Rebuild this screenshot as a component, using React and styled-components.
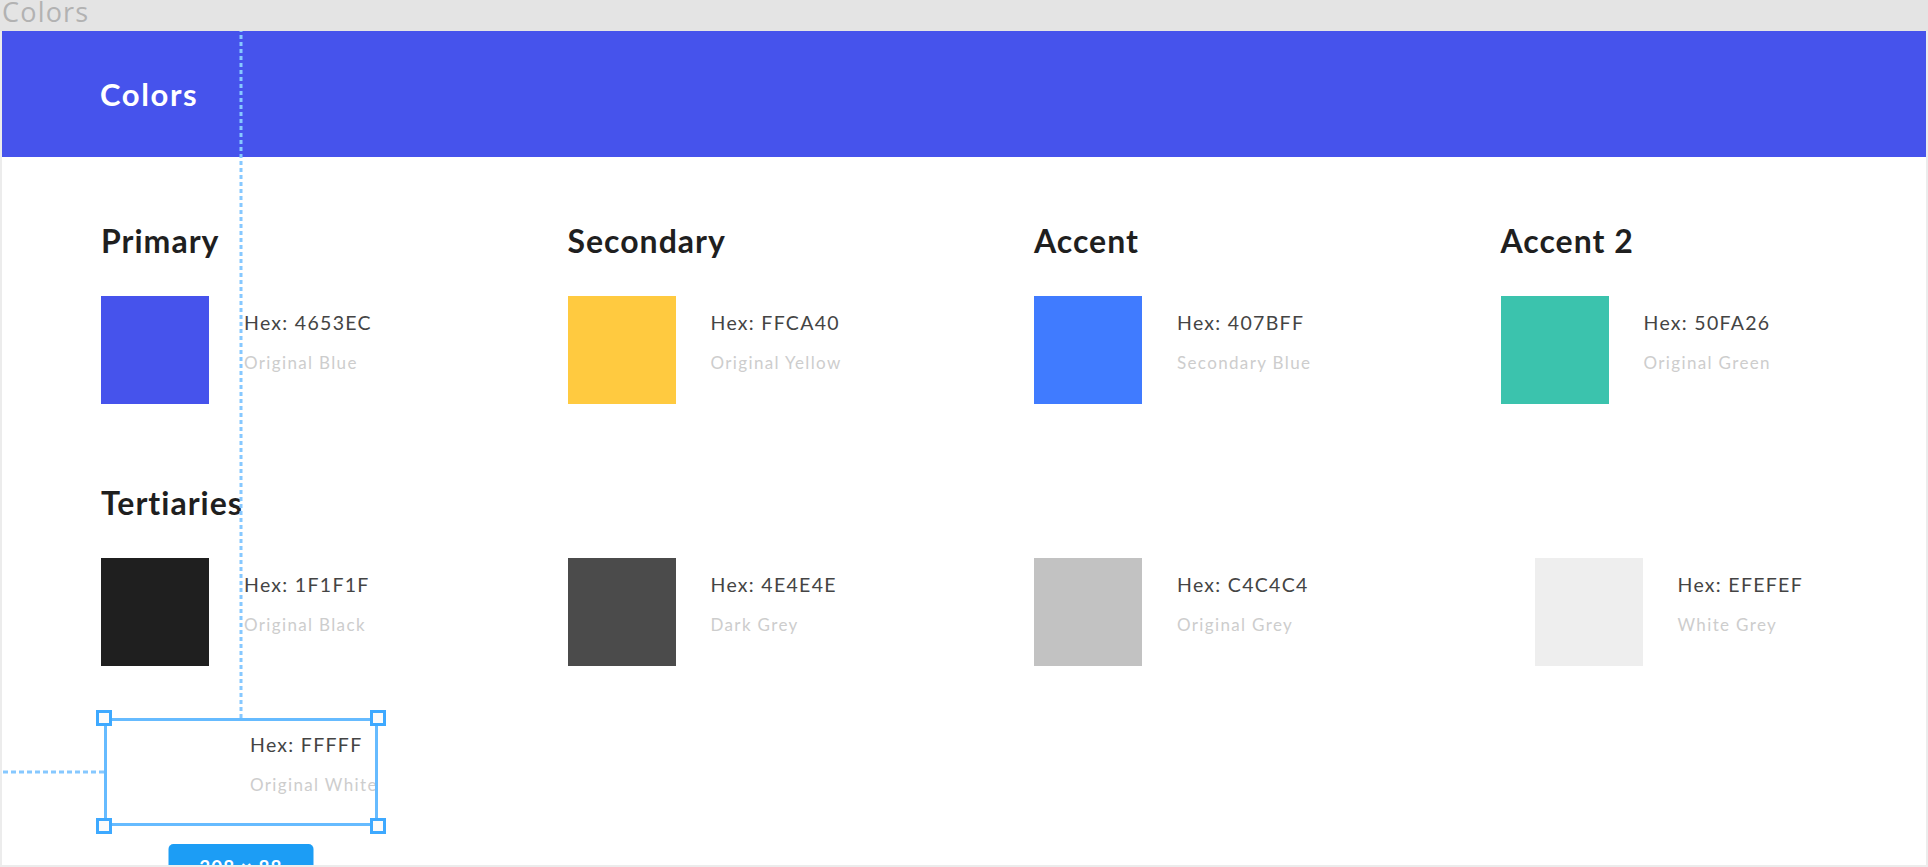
import React from "react";
import styled, { createGlobalStyle } from "styled-components";

const GlobalStyle = createGlobalStyle`
  html, body {
    margin: 0;
    padding: 0;
    background: #ffffff;
    overflow: hidden;
  }
  body {
    font-family: Lato, "Liberation Sans", sans-serif;
  }
  * { box-sizing: border-box; }
`;

const Page = styled.div`
  width: 1928px;
  height: 867px;
  display: flex;
  flex-direction: column;
  overflow: hidden;
`;

const TopBar = styled.div`
  flex: none;
  height: 31px;
  background: #e4e4e4;
  padding-left: 2px;
  display: flex;
  align-items: flex-start;
`;

const TopLabel = styled.span`
  font-family: "Open Sans", "Liberation Sans", sans-serif;
  font-size: 27px;
  line-height: 23px;
  color: #b2b2b2;
  letter-spacing: 1.2px;
`;

const Frame = styled.div`
  position: relative;
  flex: 1;
  display: flex;
  flex-direction: column;
  border: 2px solid #ececec;
  border-top: none;
  overflow: hidden;
`;

const Banner = styled.header`
  flex: none;
  height: 126px;
  background: #4653ec;
  display: flex;
  align-items: center;
  padding-left: 98px;
`;

const BannerTitle = styled.h1`
  margin: 0;
  font-family: Lato, "Liberation Sans", sans-serif;
  font-weight: 700;
  font-size: 31px;
  line-height: 31px;
  letter-spacing: 1.6px;
  color: #ffffff;
`;

const Content = styled.main`
  display: flex;
  flex-direction: column;
  align-items: flex-start;
  padding: 68px 0 0 99px;
`;

const PaletteGrid = styled.div`
  display: grid;
  grid-template-columns: repeat(4, 466.5px);
`;

const Group = styled.section`
  display: flex;
  flex-direction: column;
`;

const GroupTitle = styled.h2`
  margin: 0 0 ${(p) => p.$gap || 40}px;
  font-family: Lato, "Liberation Sans", sans-serif;
  font-weight: 700;
  font-size: 32px;
  line-height: 31px;
  letter-spacing: 1px;
  color: #1f1f1f;
`;

const SectionTitle = styled(GroupTitle)`
  margin-top: 83px;
`;

const SwatchRow = styled.div`
  display: flex;
  gap: ${(p) => p.$gap || 35}px;
  margin-left: ${(p) => p.$offset || 0}px;
`;

const Swatch = styled.div`
  flex: none;
  width: 108px;
  height: 108px;
  background: ${(p) => p.$color};
`;

const Info = styled.div`
  display: flex;
  flex-direction: column;
  gap: 22px;
  padding-top: 17px;
  white-space: nowrap;
`;

const Hex = styled.span`
  font-size: 19.5px;
  line-height: 19px;
  letter-spacing: 1.3px;
  color: #444444;
`;

const Name = styled.span`
  font-size: 17px;
  line-height: 17px;
  letter-spacing: 1.35px;
  color: #cdcdcd;
`;

const SelectedItem = styled.div`
  position: relative;
  margin-top: 52px;
  margin-left: 3px;
`;

const SelectionOutline = styled.div`
  position: absolute;
  inset: 0;
  border: 3px solid #66bbff;
  pointer-events: none;
`;

const Handle = styled.span`
  position: absolute;
  width: 16px;
  height: 16px;
  background: #fbfbfb;
  border: 3px solid #3ea9ff;
  ${(p) => (p.$v === "top" ? "top: -8px;" : "bottom: -8px;")}
  ${(p) => (p.$h === "left" ? "left: -8px;" : "right: -8px;")}
`;

const GuideV = styled.div`
  position: absolute;
  left: 50%;
  bottom: 100%;
  width: 3px;
  height: 800px;
  transform: translateX(-50%);
  background: repeating-linear-gradient(
    to top,
    #86c8ff 0 4px,
    transparent 4px 7px
  );
`;

const GuideH = styled.div`
  position: absolute;
  right: 100%;
  top: 50%;
  height: 3px;
  width: 200px;
  transform: translateY(-50%);
  background: repeating-linear-gradient(
    to left,
    #86c8ff 0 5px,
    transparent 5px 8px
  );
`;

const SizeBadge = styled.div`
  position: absolute;
  left: 50%;
  top: calc(100% + 18px);
  transform: translateX(-50%);
  width: 145px;
  height: 44px;
  border-radius: 5px;
  background: #1c9df5;
  color: #ffffff;
  font-size: 19px;
  font-weight: 700;
  line-height: 46px;
  text-align: center;
  letter-spacing: 1px;
`;

const primaries = [
  { title: "Primary", color: "#4653EC", hex: "4653EC", name: "Original Blue" },
  { title: "Secondary", color: "#FFCA40", hex: "FFCA40", name: "Original Yellow" },
  { title: "Accent", color: "#407BFF", hex: "407BFF", name: "Secondary Blue" },
  { title: "Accent 2", color: "#3BC3AD", hex: "50FA26", name: "Original Green" },
];

const tertiaries = [
  { color: "#1F1F1F", hex: "1F1F1F", name: "Original Black", offset: 0 },
  { color: "#4B4B4B", hex: "4E4E4E", name: "Dark Grey", offset: 0 },
  { color: "#C2C2C2", hex: "C4C4C4", name: "Original Grey", offset: 0 },
  { color: "#EEEEEE", hex: "EFEFEF", name: "White Grey", offset: 34 },
];

function ColorItem({ color, hex, name, offset, gap }) {
  return (
    <SwatchRow $offset={offset} $gap={gap}>
      <Swatch $color={color} />
      <Info>
        <Hex>Hex: {hex}</Hex>
        <Name>{name}</Name>
      </Info>
    </SwatchRow>
  );
}

export default function App() {
  return (
    <Page>
      <GlobalStyle />
      <TopBar>
        <TopLabel>Colors</TopLabel>
      </TopBar>
      <Frame>
        <Banner>
          <BannerTitle>Colors</BannerTitle>
        </Banner>
        <Content>
          <PaletteGrid>
            {primaries.map((c) => (
              <Group key={c.title}>
                <GroupTitle>{c.title}</GroupTitle>
                <ColorItem color={c.color} hex={c.hex} name={c.name} />
              </Group>
            ))}
          </PaletteGrid>

          <SectionTitle $gap={40}>Tertiaries</SectionTitle>
          <PaletteGrid>
            {tertiaries.map((c) => (
              <ColorItem
                key={c.hex}
                color={c.color}
                hex={c.hex}
                name={c.name}
                offset={c.offset}
              />
            ))}
          </PaletteGrid>

          <SelectedItem>
            <ColorItem color="#FFFFFF" hex="FFFFF" name="Original White" gap={38} />
            <SelectionOutline />
            <Handle $v="top" $h="left" />
            <Handle $v="top" $h="right" />
            <Handle $v="bottom" $h="left" />
            <Handle $v="bottom" $h="right" />
            <GuideV />
            <GuideH />
            <SizeBadge>308 × 88</SizeBadge>
          </SelectedItem>
        </Content>
      </Frame>
    </Page>
  );
}
